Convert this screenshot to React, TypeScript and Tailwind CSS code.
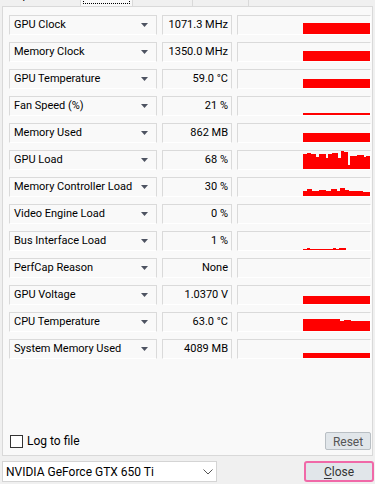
import React from "react";

type Seg = [number, number];

const sensors: { name: string; value: string; graph: Seg[] }[] = [
  { name: "GPU Clock", value: "1071.3 MHz", graph: [[67, 11]] },
  { name: "Memory Clock", value: "1350.0 MHz", graph: [[67, 10]] },
  { name: "GPU Temperature", value: "59.0 °C", graph: [[67, 9]] },
  { name: "Fan Speed (%)", value: "21 %", graph: [[67, 2]] },
  { name: "Memory Used", value: "862 MB", graph: [[67, 9]] },
  {
    name: "GPU Load",
    value: "68 %",
    graph: [
      [4, 15], [4, 16], [5, 15], [3, 12], [7, 15], [2, 11], [4, 15], [6, 16],
      [3, 11], [3, 18], [4, 17], [2, 4], [7, 13], [7, 14], [2, 12], [4, 13],
    ],
  },
  {
    name: "Memory Controller Load",
    value: "30 %",
    graph: [
      [4, 5], [5, 7], [7, 5], [7, 6], [5, 5], [6, 7], [3, 5], [5, 8], [4, 6],
      [14, 5], [7, 4],
    ],
  },
  { name: "Video Engine Load", value: "0 %", graph: [] },
  {
    name: "Bus Interface Load",
    value: "1 %",
    graph: [[4, 1], [3, 2], [23, 1], [3, 2], [3, 1], [7, 2], [24, 0]],
  },
  { name: "PerfCap Reason", value: "None", graph: [] },
  { name: "GPU Voltage", value: "1.0370 V", graph: [[67, 8]] },
  {
    name: "CPU Temperature",
    value: "63.0 °C",
    graph: [[37, 12], [4, 10], [7, 11], [19, 10]],
  },
  { name: "System Memory Used", value: "4089 MB", graph: [[67, 5]] },
];

const tabs = [
  { label: "Graphics Card", w: "w-[81px]" },
  { label: "Sensors", w: "w-[52px]", active: true },
  { label: "Advanced", w: "w-[60px]" },
  { label: "Validation", w: "w-[56px]" },
];

function SensorRow({ name, value, graph }: { name: string; value: string; graph: Seg[] }) {
  return (
    <div className="flex h-[20px] gap-[5px]">
      <div className="flex w-[148px] items-center justify-between border border-[#dadada] border-b-white pl-[4px] pr-[8px]">
        <span className="whitespace-nowrap">{name}</span>
        <svg width="7" height="4" viewBox="0 0 7 4">
          <polygon points="0,0 7,0 3.5,4" fill="#4d5361" />
        </svg>
      </div>
      <div className="flex w-[70px] items-center justify-end border border-[#dadada] border-b-white pr-[3px]">
        <span className="whitespace-nowrap">{value}</span>
      </div>
      <div className="flex w-[134px] items-end justify-end border border-[#dadada] border-b-white border-r-white">
        {graph.map(([w, h], i) => (
          <div key={i} className={h ? "bg-[#ff0000]" : ""} style={{ width: w, height: h }} />
        ))}
      </div>
    </div>
  );
}

export default function App() {
  return (
    <div className="relative h-[484px] w-[375px] overflow-hidden bg-[#f0f0f0] font-[Roboto,sans-serif] text-[11px] text-black">
      {/* tab strip, only the bottom edge shows */}
      <div className="relative z-10 flex h-[6px] items-end overflow-hidden">
        {tabs.map((t) => (
          <div
            key={t.label}
            className={`flex h-[20px] shrink-0 items-end justify-center border-r border-[#d9d9d9] ${t.w} ${
              t.active ? "bg-[#f9f9f9]" : "bg-[#f0f0f0]"
            }`}
          >
            {t.active ? (
              <div className="mb-[2px] flex h-[16px] w-[47px] items-end justify-center border border-dotted border-black leading-[14px]">
                {t.label}
              </div>
            ) : (
              <span className="mb-[3px] leading-[14px]">{t.label}</span>
            )}
          </div>
        ))}
      </div>

      <div className="ml-[2px] flex h-[450px] w-[371px] flex-col border border-[#d9d9d9] bg-[#f9f9f9] pb-[5px] pl-[6px] pt-[8px]">
        <div className="flex flex-col gap-[7px]">
          {sensors.map((s) => (
            <SensorRow key={s.name} {...s} />
          ))}
        </div>

        <div className="mt-auto flex h-[18px] items-center justify-between pr-[1px]">
          <label className="flex items-center gap-[4px] pl-[1px]">
            <span className="h-[13px] w-[13px] border border-[#333333] bg-white" />
            <span className="text-[12px]">Log to file</span>
          </label>
          <button className="h-[18px] w-[46px] rounded-[2px] border border-[#b9bfc4] bg-[#e1e6ea] text-[12px] text-[#555555]">
            Reset
          </button>
        </div>
      </div>

      <div className="mt-[5px] flex items-center justify-between pl-[2px] pr-[1px]">
        <div className="flex h-[21px] w-[215px] items-center justify-between border border-[#d4d4d4] bg-white pl-[3px] pr-[2px]">
          <span className="text-[12px]">NVIDIA GeForce GTX 650 Ti</span>
          <div className="flex h-[15px] w-[12px] items-center justify-center">
            <svg width="10" height="6" viewBox="0 0 10 6">
              <polyline points="0.5,0.5 5,5 9.5,0.5" fill="none" stroke="#555555" strokeWidth="1" />
            </svg>
          </div>
        </div>
        <button className="h-[21px] w-[70px] rounded-[3px] border-2 border-[#f069a8] bg-[#e1e6ea] text-[12px] text-[#333333]">
          <span className="underline underline-offset-2">C</span>lose
        </button>
      </div>
    </div>
  );
}
